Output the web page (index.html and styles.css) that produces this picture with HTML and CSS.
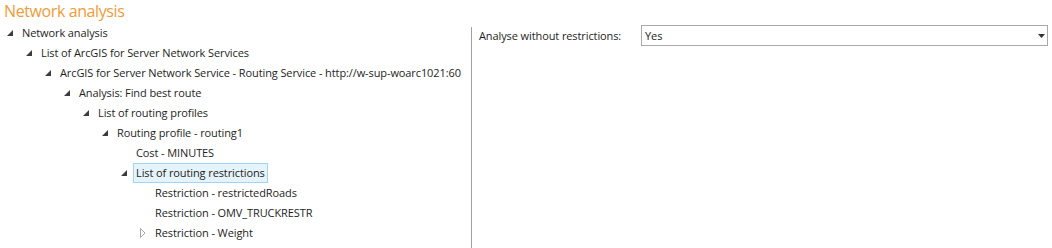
FILE: index.html
```html
<!DOCTYPE html>
<html>
<head>
    <title>Network analysis</title>
    <link rel="stylesheet" href="styles.css">
</head>
<body>
    <h1 class="title">Network analysis</h1>
    <div class="main">
        <div class="tree">
            <ul class="tree-list">
                <li class="node lvl0"><span class="toggle open"><svg width="6" height="6"><polygon points="6,0 6,6 0,6"/></svg></span><span class="label">Network analysis</span></li>
                <li class="node lvl1"><span class="toggle open"><svg width="6" height="6"><polygon points="6,0 6,6 0,6"/></svg></span><span class="label">List of ArcGIS for Server Network Services</span></li>
                <li class="node lvl2"><span class="toggle open"><svg width="6" height="6"><polygon points="6,0 6,6 0,6"/></svg></span><span class="label">ArcGIS for Server Network Service - Routing Service - http://w-sup-woarc1021:60</span></li>
                <li class="node lvl3"><span class="toggle open"><svg width="6" height="6"><polygon points="6,0 6,6 0,6"/></svg></span><span class="label">Analysis: Find best route</span></li>
                <li class="node lvl4"><span class="toggle open"><svg width="6" height="6"><polygon points="6,0 6,6 0,6"/></svg></span><span class="label">List of routing profiles</span></li>
                <li class="node lvl5"><span class="toggle open"><svg width="6" height="6"><polygon points="6,0 6,6 0,6"/></svg></span><span class="label">Routing profile - routing1</span></li>
                <li class="node lvl6"><span class="toggle"></span><span class="label">Cost - MINUTES</span></li>
                <li class="node lvl6"><span class="toggle open"><svg width="6" height="6"><polygon points="6,0 6,6 0,6"/></svg></span><span class="label selected">List of routing restrictions</span></li>
                <li class="node lvl7"><span class="toggle"></span><span class="label">Restriction - restrictedRoads</span></li>
                <li class="node lvl7"><span class="toggle"></span><span class="label">Restriction - OMV_TRUCKRESTR</span></li>
                <li class="node lvl7"><span class="toggle closed"><svg width="6" height="10"><polygon points="0.5,0.5 5,5 0.5,9.5"/></svg></span><span class="label">Restriction - Weight</span></li>
            </ul>
        </div>
        <div class="splitter"></div>
        <div class="props">
            <div class="prop-row">
                <span class="prop-label">Analyse without restrictions:</span>
                <div class="combo">
                    <span class="combo-value">Yes</span>
                    <svg class="combo-arrow" width="7" height="4"><polygon points="0,0 7,0 3.5,4"/></svg>
                </div>
            </div>
        </div>
    </div>
</body>
</html>
```

FILE: styles.css
```css
body {
    margin: 0;
    background-color: #ffffff;
    font-family: "Open Sans", "Noto Sans", sans-serif;
    font-size: 11px;
    letter-spacing: -0.1px;
    color: #1e1e1e;
    overflow: hidden;
}
.title {
    margin: 0;
    padding-left: 4px;
    height: 23px;
    line-height: 22px;
    font-size: 16px;
    letter-spacing: -0.4px;
    font-weight: normal;
    color: #f39a36;
}
.main {
    display: flex;
    height: 225px;
}
.tree {
    width: 471px;
    overflow: hidden;
    flex-shrink: 0;
}
.tree-list {
    list-style: none;
    margin: 0;
    padding: 0;
}
.node {
    display: flex;
    align-items: center;
    height: 20px;
    white-space: nowrap;
    padding-left: 3px;
}
.lvl1 { padding-left: 22px; }
.lvl2 { padding-left: 41px; }
.lvl3 { padding-left: 60px; }
.lvl4 { padding-left: 79px; }
.lvl5 { padding-left: 98px; }
.lvl6 { padding-left: 117px; }
.lvl7 { padding-left: 136px; }
.toggle {
    width: 16px;
    flex-shrink: 0;
    display: flex;
    align-items: center;
    padding-left: 4px;
    box-sizing: border-box;
}
.toggle svg {
    display: block;
}
.toggle.open polygon {
    fill: #3c3c3c;
}
.toggle.closed polygon {
    fill: none;
    stroke: #a6a6a6;
    stroke-width: 1;
}
.label {
    display: inline-block;
    line-height: 18px;
    padding: 0 2px;
    border: 1px solid transparent;
}
.label.selected {
    background-color: #e5f3fb;
    border-color: #9fd5f2;
}
.splitter {
    width: 1px;
    margin-top: 4px;
    background-color: #a0a0a0;
    flex-shrink: 0;
}
.props {
    flex-grow: 1;
    padding: 2px 4px 0 7px;
}
.prop-row {
    display: flex;
    align-items: center;
}
.prop-label {
    width: 162px;
    flex-shrink: 0;
}
.combo {
    flex-grow: 1;
    height: 21px;
    box-sizing: border-box;
    border: 1px solid #a9a9a9;
    display: flex;
    align-items: center;
    justify-content: space-between;
    padding: 0 2px 0 3px;
}
.combo-arrow polygon {
    fill: #333333;
}
```
